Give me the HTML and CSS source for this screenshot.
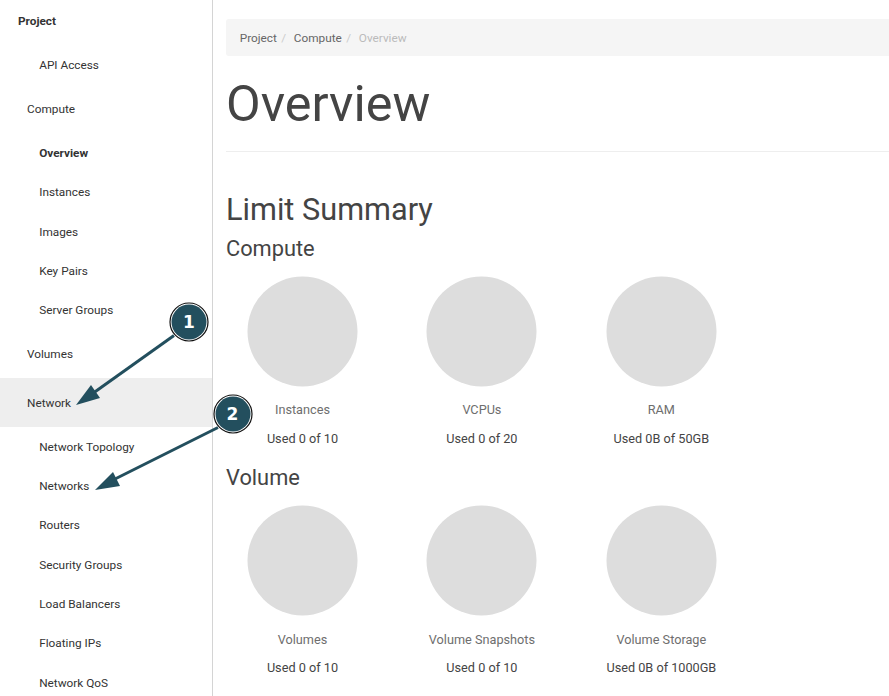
FILE: index.html
```html
<!DOCTYPE html>
<html lang="en">
<head>
<meta charset="utf-8">
<title>Overview</title>
<link rel="stylesheet" href="styles.css">
</head>
<body>
<div class="layout">
  <nav class="sidebar">
    <a class="item root">Project</a>
    <a class="item leaf tall">API Access</a>
    <a class="item group">Compute</a>
    <a class="item leaf first active">Overview</a>
    <a class="item leaf">Instances</a>
    <a class="item leaf">Images</a>
    <a class="item leaf">Key Pairs</a>
    <a class="item leaf">Server Groups</a>
    <a class="item group volumes">Volumes</a>
    <a class="item group selected">Network</a>
    <a class="item leaf">Network Topology</a>
    <a class="item leaf">Networks</a>
    <a class="item leaf">Routers</a>
    <a class="item leaf">Security Groups</a>
    <a class="item leaf">Load Balancers</a>
    <a class="item leaf">Floating IPs</a>
    <a class="item leaf">Network QoS</a>
  </nav>
  <main class="content">
    <ol class="breadcrumb"><li>Project</li><li>Compute</li><li class="current">Overview</li></ol>
    <h1>Overview</h1>
    <h2>Limit Summary</h2>
    <h3>Compute</h3>
    <section class="charts">
      <div class="chart"><svg class="pie" viewBox="0 0 111 111"><circle cx="55.5" cy="55.5" r="55"/></svg><div class="name">Instances</div><div class="used">Used 0 of 10</div></div>
      <div class="chart"><svg class="pie" viewBox="0 0 111 111"><circle cx="55.5" cy="55.5" r="55"/></svg><div class="name">VCPUs</div><div class="used">Used 0 of 20</div></div>
      <div class="chart"><svg class="pie" viewBox="0 0 111 111"><circle cx="55.5" cy="55.5" r="55"/></svg><div class="name">RAM</div><div class="used">Used 0B of 50GB</div></div>
    </section>
    <h3>Volume</h3>
    <section class="charts volume">
      <div class="chart"><svg class="pie" viewBox="0 0 111 111"><circle cx="55.5" cy="55.5" r="55"/></svg><div class="name">Volumes</div><div class="used">Used 0 of 10</div></div>
      <div class="chart"><svg class="pie" viewBox="0 0 111 111"><circle cx="55.5" cy="55.5" r="55"/></svg><div class="name">Volume Snapshots</div><div class="used">Used 0 of 10</div></div>
      <div class="chart"><svg class="pie" viewBox="0 0 111 111"><circle cx="55.5" cy="55.5" r="55"/></svg><div class="name">Volume Storage</div><div class="used">Used 0B of 1000GB</div></div>
    </section>
  </main>
</div>
<svg class="callouts" width="889" height="696" viewBox="0 0 889 696">
  <g class="arrow"><path d="M174 335.500L94 392.500"/><polygon points="76,405 91,385 100,398"/></g>
  <g class="arrow"><path d="M218 427.500L114 479.500"/><polygon points="95,490 113,472 120,486"/></g>
  <g class="marker"><circle class="ring" cx="189" cy="322" r="19"/><circle class="disc" cx="189" cy="322" r="17.500"/><text x="189" y="328">1</text></g>
  <g class="marker"><circle class="ring" cx="233" cy="414" r="19"/><circle class="disc" cx="233" cy="414" r="17.500"/><text x="232.500" y="420">2</text></g>
</svg>
</body>
</html>
```
FILE: styles.css
```css
* { box-sizing: border-box; }
body { margin: 0; height: 696px; overflow: hidden; font-family: Roboto, sans-serif; color: #444; background: #fff; }
.layout { display: flex; height: 696px; overflow: hidden; }
.sidebar { width: 213px; flex: none; border-right: 1px solid #d4d4d4; font-size: 11.8px; color: #333; }
.item { display: flex; align-items: center; height: 39.35px; }
.root { height: 43px; padding: 0 0 2px 18px; font-weight: 700; }
.leaf { padding-left: 39.2px; }
.group { height: 44px; padding-left: 27px; }
.tall { height: 44px; }
.first { margin-top: 2.2px; }
.active { font-weight: 700; }
.volumes { margin: 2px 0 2.15px; }
.selected { height: 49px; padding-top: 1px; background: #eee; }
.content { flex: 1; padding: 19px 0 0 13px; }
.breadcrumb { display: flex; align-items: center; height: 37px; margin: 0; padding: 0 13.7px; border-radius: 3px 0 0 3px; list-style: none; background: #f5f5f5; font-size: 11.8px; color: #666; }
.breadcrumb li + li::before { content: "/"; color: #ccc; padding: 0 7.6px 0 4.5px; }
.breadcrumb .current { color: #bbb; }
h1, h2, h3 { margin: 0; font-weight: 400; }
h1 { height: 96px; padding-top: 18px; border-bottom: 1px solid #eee; font-size: 50.4px; line-height: 60px; }
h2 { margin-top: 38px; font-size: 30.7px; line-height: 40px; }
h3 { font-size: 21.8px; line-height: 38px; }
.charts { display: flex; height: 191px; padding-top: 8px; }
.chart { width: 179.45px; padding-right: 26.5px; text-align: center; font-size: 12.7px; }
.pie { display: block; width: 111px; height: 111px; margin: 0 auto; fill: #ddd; }
.name { margin-top: 13px; line-height: 20px; color: #6e6e6e; }
.used { margin-top: 9px; line-height: 20px; }
.volume .name { margin-top: 14px; }
.volume .used { margin-top: 8px; }
.callouts { position: absolute; left: 0; top: 0; }
.arrow path { stroke: #234f5e; stroke-width: 3; }
.arrow polygon { fill: #234f5e; }
.ring { fill: #fff; stroke: #111; stroke-width: 1.2px; }
.disc { fill: #234f5e; }
.marker text { fill: #fff; font: 700 17px "DejaVu Sans", sans-serif; text-anchor: middle; }
```
